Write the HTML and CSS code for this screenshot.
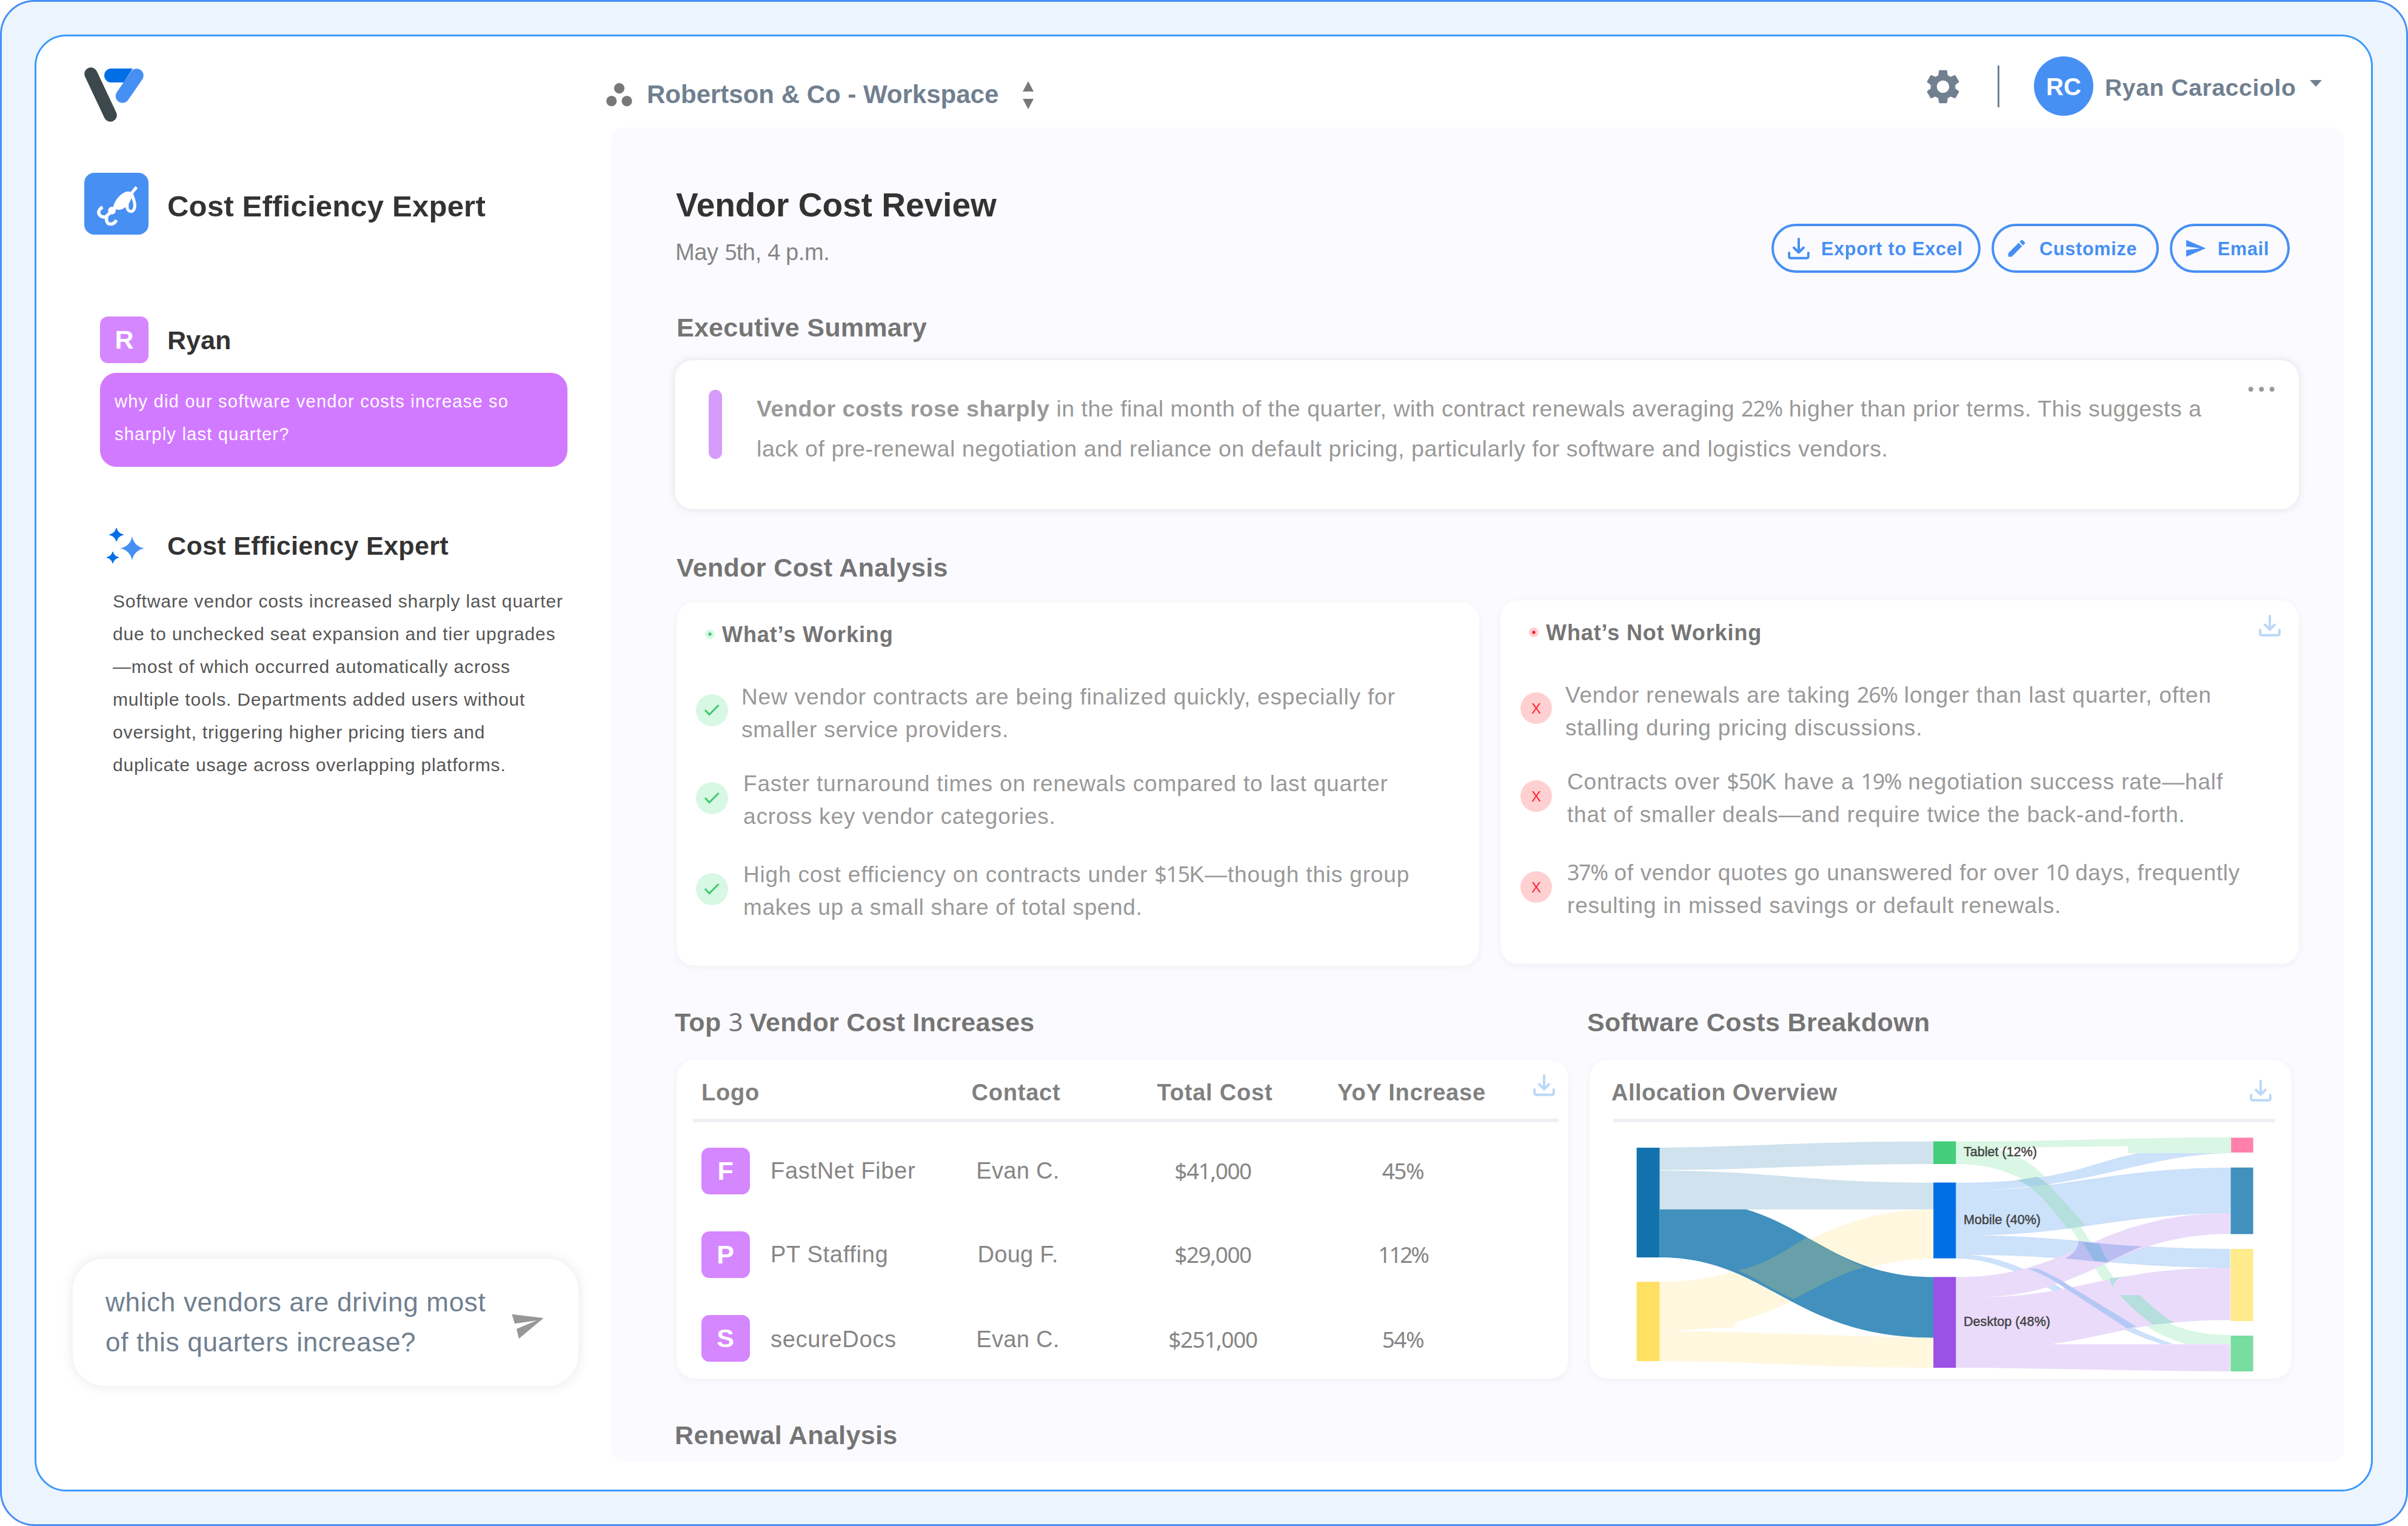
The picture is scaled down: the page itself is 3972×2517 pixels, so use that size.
FILE: index.html
```html
<!DOCTYPE html>
<html lang="en">
<head>
<meta charset="utf-8">
<title>Vendor Cost Review</title>
<link rel="stylesheet" href="styles.css">
</head>
<body>
<svg class="defs" width="0" height="0" aria-hidden="true">
  <symbol id="download" viewBox="0 0 36 36"><path d="M18 2v22M10 16.5l8 8 8-8M2.2 25v6.2a2.6 2.6 0 0 0 2.6 2.6h26.400a2.600 2.600 0 0 0 2.600-2.600V25" fill="none" stroke="currentColor" stroke-width="4" stroke-linecap="round" stroke-linejoin="round"/></symbol>
  <symbol id="check" viewBox="0 0 53 53"><circle cx="26.500" cy="26.500" r="26.500" fill="#d7f8e3"/><path d="M15 26l7 7.500L37.500 18" fill="none" stroke="#3fc871" stroke-width="3"/></symbol>
</svg>
<div class="frame">
<div class="window">
  <aside class="sidebar">
    <svg class="logo" viewBox="139 111 98 90"><path d="M150 122l32 68" stroke="#3d484d" stroke-width="21.500" stroke-linecap="round"/><path d="M225.500 124.500L202 158.500" stroke="#4790f3" stroke-width="22.500" stroke-linecap="round"/><path d="M183.500 113H219l-15 23h-20.500a11.500 11.500 0 0 1 0-23z" fill="#006fe6"/></svg>
    <div class="agent">
      <svg class="agent-icon" viewBox="21 27 318 306"><rect x="21" y="27" width="318" height="306" rx="50" fill="#478ff3"/><path d="M164 206C162 178 192 136 222 123c16-7 32-3 37 8-6 46-38 80-69 79z" fill="#fff"/><g fill="none" stroke="#fff"><path d="M250 134l30-36" stroke-width="15"/><path d="M256 134c8 18 15 38 15 55 0 18-8 29-19 29s-19-9-19-24c0-22 8-42 23-60z" stroke-width="15"/><path d="M152 222l-24 22M112 197c-22 12-24 30-14 40 9 10 22 10 34 8-5 22 4 36 20 36 13 0 22-8 28-20" stroke-width="16"/></g><circle cx="158" cy="214" r="19" fill="#fff"/></svg>
      <h1 class="agent-name">Cost Efficiency Expert</h1>
    </div>
    <div class="thread">
      <div class="sender"><span class="badge">R</span><h2 class="sender-name">Ryan</h2></div>
      <p class="bubble">why did our software vendor costs increase so<br>sharply last quarter?</p>
      <div class="sender reply"><svg class="sparkles" viewBox="176 871 62 58"><path d="M218 884.500q3 16.500 20 20-17 3.500-20 20-3-16.500-20-20 17-3.500 20-20z" fill="#4790f3"/><path d="M192 871q2.200 8.800 11.500 11-9.300 2.200-11.500 11-2.200-8.800-11.500-11 9.300-2.200 11.500-11zM186 910q2 7.600 10 9.500-8 1.900-10 9.500-2-7.600-10-9.500 8-1.900 10-9.500z" fill="#006fe6" stroke="#006fe6"/></svg><h2 class="sender-name">Cost Efficiency Expert</h2></div>
      <p class="answer">Software vendor costs increased sharply last quarter<br>due to unchecked seat expansion and tier upgrades<br>—most of which occurred automatically across<br>multiple tools. Departments added users without<br>oversight, triggering higher pricing tiers and<br>duplicate usage across overlapping platforms.</p>
    </div>
    <div class="composer">
      <p class="draft">which vendors are driving most<br>of this quarters increase?</p>
      <svg class="send" viewBox="844 2166 53 41"><path d="M844.400 2166.700L896.700 2173l-40.800 34-3.900-16 33-14-36 5.300z" fill="#979797"/></svg>
    </div>
  </aside>
  <main class="main">
    <header class="topbar">
      <svg class="dots" viewBox="1000 137 43 39"><g fill="#787878"><circle cx="1021.500" cy="145.600" r="8.600"/><circle cx="1008.700" cy="166.700" r="8.600"/><circle cx="1034" cy="166.700" r="8.600"/></g></svg>
      <span class="workspace">Robertson &amp; Co - Workspace</span>
      <svg class="sorter" viewBox="0 0 18 46"><path d="M9 0l9 17H0zM9 46l9-17H0z" fill="#787878"/></svg>
      <div class="account">
        <svg class="gear" viewBox="0 0 24 24"><path fill="#708090" d="M19.140 12.940c.04-.3.060-.61.060-.94 0-.32-.02-.64-.07-.94l2.030-1.580c.18-.14.230-.41.120-.61l-1.920-3.320c-.12-.22-.37-.29-.59-.22l-2.390.96c-.5-.38-1.030-.7-1.620-.94l-.36-2.540c-.04-.24-.24-.41-.48-.41h-3.840c-.24 0-.43.17-.47.41l-.36 2.540c-.59.24-1.130.57-1.620.94l-2.390-.96c-.22-.08-.47 0-.59.22L2.740 8.870c-.12.21-.08.47.12.61l2.030 1.580c-.05.3-.09.63-.09.94s.02.64.07.94l-2.030 1.580c-.18.14-.23.41-.12.61l1.920 3.320c.12.22.37.29.59.22l2.390-.96c.5.38 1.030.7 1.620.94l.36 2.540c.05.24.24.41.48.41h3.840c.24 0 .44-.17.47-.41l.36-2.540c.59-.24 1.130-.56 1.620-.94l2.390.96c.22.08.47 0 .59-.22l1.920-3.320c.12-.22.070-.47-.12-.61l-2.010-1.580zM12 15.600c-1.980 0-3.600-1.620-3.600-3.600s1.620-3.600 3.600-3.600 3.600 1.620 3.600 3.600-1.620 3.600-3.600 3.600z"/></svg>
        <span class="divider"></span>
        <span class="avatar">RC</span>
        <span class="user">Ryan Caracciolo</span>
        <svg class="caret" viewBox="0 0 20 11"><path d="M0 0h20L10 11z" fill="#708090"/></svg>
      </div>
    </header>
    <section class="panel">
      <div class="report-head">
        <div>
          <h2 class="report-title">Vendor Cost Review</h2>
          <p class="report-date">May <span class="num">5</span>th, <span class="num">4</span> p.m.</p>
        </div>
        <div class="actions">
          <button class="btn btn-export"><svg class="i-download"><use href="#download"/></svg>Export to Excel</button>
          <button class="btn btn-custom"><svg class="i-pencil" viewBox="0 0 24 24"><path fill="currentColor" d="M3 17.250V21h3.750L17.810 9.940l-3.750-3.750L3 17.250zM20.710 7.040a1 1 0 0 0 0-1.410l-2.340-2.340a1 1 0 0 0-1.410 0l-1.830 1.830 3.750 3.750 1.830-1.830z"/></svg>Customize</button>
          <button class="btn btn-email"><svg class="i-send" viewBox="0 0 24 24"><path fill="currentColor" d="M2.010 21L23 12 2.010 3 2 10l15 2-15 2z"/></svg>Email</button>
        </div>
      </div>
      <h3 class="heading h-exec">Executive Summary</h3>
      <div class="card exec">
        <span class="accent"></span>
        <p class="exec-text"><b>Vendor costs rose sharply</b><span class="tight"> in the final month of the quarter, with contract renewals averaging <span class="num">22%</span> higher than prior terms. This suggests a</span><br>lack of pre-renewal negotiation and reliance on default pricing, particularly for software and logistics vendors.</p>
        <svg class="more" viewBox="0 0 44 8"><g fill="#999"><circle cx="4.800" cy="4" r="4"/><circle cx="22.300" cy="4" r="4"/><circle cx="39.700" cy="4" r="4"/></g></svg>
      </div>
      <h3 class="heading h-analysis">Vendor Cost Analysis</h3>
      <div class="analysis">
        <div class="card working">
          <h4 class="verdict"><svg class="pulse" viewBox="0 0 16 16"><circle cx="8" cy="8" r="8" fill="#d7f8e3"/><circle cx="8" cy="8" r="2.700" fill="#3fc871"/></svg>What’s Working</h4>
          <div class="item first"><svg class="mark"><use href="#check"/></svg><p>New vendor contracts are being finalized quickly, especially for<br>smaller service providers.</p></div>
          <div class="item second"><svg class="mark"><use href="#check"/></svg><p>Faster turnaround times on renewals compared to last quarter<br>across key vendor categories.</p></div>
          <div class="item third"><svg class="mark"><use href="#check"/></svg><p>High cost efficiency on contracts under <span class="num">$15</span>K—though this group<br><span class="snug">makes up a small share of total spend.</span></p></div>
        </div>
        <div class="card not-working">
          <svg class="card-download top-right"><use href="#download"/></svg>
          <h4 class="verdict"><svg class="pulse" viewBox="0 0 16 16"><circle cx="8" cy="8" r="8" fill="#ffd0d2"/><circle cx="8" cy="8" r="2.700" fill="#ff1f2e"/></svg>What’s Not Working</h4>
          <div class="item first"><span class="cross">X</span><p>Vendor renewals are taking <span class="num">26%</span> longer than last quarter, often<br>stalling during pricing discussions.</p></div>
          <div class="item second"><span class="cross">X</span><p>Contracts over <span class="num">$50</span>K have a <span class="num">19%</span> negotiation success rate—half<br>that of smaller deals—and require twice the back-and-forth.</p></div>
          <div class="item third"><span class="cross">X</span><p><span class="snug"><span class="num">37%</span> of vendor quotes go unanswered for over <span class="num">10</span> days, frequently</span><br>resulting in missed savings or default renewals.</p></div>
        </div>
      </div>
      <div class="bottom">
        <div class="increases">
          <h3 class="heading top3">Top <span class="num">3</span> Vendor Cost Increases</h3>
          <div class="card vendor-table">
            <div class="cols head"><span>Logo</span><span class="c">Contact</span><span class="c">Total Cost</span><span class="c">YoY Increase</span><svg class="card-download"><use href="#download"/></svg></div>
            <div class="rule"></div>
            <div class="cols row"><span class="vendor"><span class="badge">F</span>FastNet Fiber</span><span class="c contact">Evan C.</span><span class="c num">$41,000</span><span class="c num">45%</span></div>
            <div class="cols row"><span class="vendor"><span class="badge">P</span>PT Staffing</span><span class="c contact">Doug F.</span><span class="c num">$29,000</span><span class="c num ones">112%</span></div>
            <div class="cols row last"><span class="vendor"><span class="badge">S</span>secureDocs</span><span class="c contact">Evan C.</span><span class="c num">$251,000</span><span class="c num">54%</span></div>
          </div>
        </div>
        <div class="breakdown">
          <h3 class="heading">Software Costs Breakdown</h3>
          <div class="card chart-card">
            <div class="chart-head">Allocation Overview<svg class="card-download"><use href="#download"/></svg></div>
            <div class="rule"></div>
            <svg class="sankey" viewBox="2690 1860 1040 410">
              <g transform="translate(2600 1720) scale(.790816 .369898)">
                <path d="M174 468C380 462 480 440 746 440V541C480 541 380 567 174 567zM174 570C400 570 480 624 746 624V743H174z" fill="#cfe2ed"/>
                <path d="M174 1066C430 1066 490 743 746 743V962C560 962 480 1170 330 1246V1270C280 1270 240 1280 204 1286C400 1290 600 1313 746 1313V1449C500 1449 380 1420 174 1420z" fill="#fff8df"/>
                <path d="M174 743H355C490 830 560 1045 746 1045V1315C450 1315 400 957 174 957z" fill="#4190be"/>
                <path d="M480 868C525 915 560 970 602 1000C548 1030 500 1095 453 1143C410 1105 380 1050 337 1015C400 985 440 920 480 868z" fill="#689fa8"/>
                <path d="M792 440C1000 440 1150 422 1367 422V492H1151V461C1020 463 930 468 870 472C1090 560 1050 1303 1364 1303V1344H1275C1020 1200 1090 541 792 541z" fill="#d9f7e4"/>
                <path d="M792 624C1020 624 1060 540 1172 492H1364C1180 500 1090 640 832 659C1030 650 1130 557 1364 557V760C1130 765 1030 858 832 858C1050 865 1130 919 1364 919V1003C1130 1003 1040 945 820 947C960 960 1080 1230 1247 1344H1222C1050 1230 940 962 792 962z" fill="#cce1fa"/>
                <path d="M792 1045C1040 1045 1080 760 1364 760V852C1120 852 1070 1135 832 1135C1050 1135 1100 1003 1364 1003V1236C1180 1236 1110 1310 990 1344H1364V1465C1180 1465 980 1449 792 1449z" fill="#eadbfb"/>
                <path d="M1047 884Q1115 900 1180 908Q1145 940 1107 980Q1080 974 1020 962Q1050 925 1047 884z" fill="#b9bdf2"/>
                <path d="M920 612Q944 606 962 597Q976 615 986 635L945 641Q935 625 920 612z" fill="#a9d3e4"/>
                <path d="M1057 890L1090 896Q1100 940 1110 978L1080 972Q1068 930 1057 890z" fill="#93b9e6"/>
                <path d="M945 641L986 635C1015 700 1040 760 1062 815L1025 830C1000 760 975 690 945 641zM1112 1052L1140 1042Q1122 1055 1119 1090zM1134 1125H1176Q1210 1200 1247 1248L1203 1256Q1160 1190 1134 1125z" fill="#b4dfdc"/>
                <path d="M942 1007H962Q1000 1040 1030 1085L1168 1265L1150 1275L1020 1095Q985 1040 942 1007z" fill="#b4c8f5"/>
                <path d="M126 468h48v489h-48z" fill="#1273ac"/><path d="M126 1066h48v353h-48z" fill="#ffe063"/><path d="M745 439h47v102h-47z" fill="#44ce7b"/><path d="M745 623h47v338h-47z" fill="#006fe6"/><path d="M745 1044h47v405h-47z" fill="#9b50e6"/><path d="M1366 423h46v66h-46z" fill="#ff80aa"/><path d="M1365 556h47v297h-47z" fill="#4190be"/><path d="M1365 919h47v322h-47z" fill="#ffea8c"/><path d="M1365 1306h47v159h-47z" fill="#78dda0"/>
              </g>
              <g class="node-label"><text x="3239" y="1907" textLength="121">Tablet (12%)</text><text x="3239" y="2018.500" textLength="127">Mobile (40%)</text><text x="3239" y="2186.800" textLength="143">Desktop (48%)</text></g>
            </svg>
          </div>
        </div>
      </div>
      <h3 class="heading h-renewal">Renewal Analysis</h3>
    </section>
  </main>
</div>
</div>
</body>
</html>
```
FILE: styles.css
```css
*{box-sizing:border-box}
body{margin:0;font-family:"Liberation Sans",Arial,sans-serif;background:#fff;white-space:nowrap}
h1,h2,h3,h4,p{margin:0}
svg{display:block;flex:none}
.defs{position:absolute}
.frame{width:3972px;height:2517px;border:3px solid #478ff3;border-radius:57px;background:#ecf4fe;padding:54px}
.window{display:flex;width:3857px;height:2403px;border:3px solid #3b99fc;border-radius:52px;background:#fff}
.sidebar{display:flex;flex-direction:column;width:940px}
.logo{width:98px;height:90px;margin:51px 0 0 79px}
.agent{display:flex;gap:31px;margin:84px 0 0 79px}
.agent-icon{width:106px;height:102px}
.agent-name{font-size:49px;line-height:102px;letter-spacing:.22px;color:#333;padding-top:4px;height:102px}
.thread{width:771px;margin:135px 0 0 105px}
.sender{display:flex;height:77px;gap:31px}
.sender-name{font-size:43px;line-height:78px;color:#333}
.badge{width:80px;height:77px;border-radius:13px;background:#d587ff;color:#fff;font-weight:700;font-size:43px;line-height:77px;text-align:center}
.bubble{height:155px;margin-top:16px;padding:21px 24px 0;border-radius:27px;background:#d27aff;color:#fff;font-size:29px;line-height:53.5px;letter-spacing:1.23px}
.reply{height:58px;margin-top:101px;padding-left:11px;gap:38px}
.reply .sender-name{line-height:58px;letter-spacing:.34px}
.sparkles{width:62px;height:58px}
.answer{margin:36px 0 0 21px;font-size:30px;line-height:54px;letter-spacing:.85px;color:#555}
.composer{display:flex;width:834px;height:210px;margin:auto 0 171px 60px;border-radius:52px;background:#fff;box-shadow:0 0 20px rgba(60,50,110,.12)}
.draft{width:724px;padding:39px 0 0 54px;font-size:44px;line-height:66px;letter-spacing:.7px;color:#708090}
.send{width:53px;height:41px;margin-top:91px}
.main{width:2867px}
.topbar{display:flex;align-items:flex-start;height:150px;padding-right:37px;color:#708090;font-weight:700}
.dots{width:43px;height:39px;margin-top:77px}
.workspace{width:589px;margin:71px 0 0 24px;font-size:42px;line-height:50px}
.sorter{width:18px;height:46px;margin:74px 0 0 31px}
.account{display:flex;align-items:flex-start;margin-left:auto}
.gear{width:68px;height:68px;margin-top:49px}
.divider{width:3px;height:69px;margin:48px 0 0 56px;background:#708090}
.avatar{width:98px;height:98px;margin:33px 0 0 57px;border-radius:50%;background:#4790f3;color:#fff;font-size:40px;line-height:100px;text-align:center}
.user{width:328px;margin:60px 0 0 19px;font-size:39px;line-height:50px;letter-spacing:.65px}
.caret{width:20px;height:11px;margin:72px 0 0 10px}
.panel{height:2202px;margin-left:8px;padding:0 75px 0 105px;border-radius:24px;background:#fbfbff;overflow:hidden}
.report-head{display:flex;justify-content:space-between;height:230px}
.report-title{padding:96px 0 0 2px;font-size:55px;line-height:64px;color:#333}
.report-date{margin-top:22px;padding-left:1px;font-size:38px;line-height:48px;letter-spacing:-.35px;color:#868686}
.actions{display:flex;gap:18px;padding:159px 15px 0 0}
.btn{display:flex;align-items:center;height:81px;border:4px solid #478ff3;border-radius:41px;background:transparent;color:#478ff3;font:700 30.5px "Liberation Sans",Arial,sans-serif;letter-spacing:.78px;padding:2px 0 0}
.btn-export{width:345px;padding-left:23px;gap:19px}
.btn-custom{width:276px;padding-left:19px;gap:19px}
.btn-email{width:198px;padding-left:20px;gap:18px}
.i-download,.i-pencil,.i-send{margin-top:-2px}
.i-download{width:36px;height:36px}
.i-pencil,.i-send{width:37px;height:37px}
.heading{font-size:43px;line-height:50px;letter-spacing:.37px;color:#757575}
.card{position:relative;border-radius:30px;background:#fff;box-shadow:0 3px 12px rgba(40,40,60,.06)}
.h-exec{margin-top:75px;padding-left:3px;letter-spacing:.25px}
.exec{display:flex;height:246px;margin-top:29px;padding-left:56px;box-shadow:0 0 14px rgba(30,30,50,.13)}
.accent{width:22px;height:114px;margin-top:49px;border-radius:11px;background:#d59bfa}
.exec-text{padding:47px 0 0 57px;font-size:37.5px;line-height:66px;letter-spacing:.58px;color:#999}
.tight{letter-spacing:.52px}
.num{font-family:"Noto Sans","Liberation Sans",sans-serif;font-size:.97em;font-weight:400;line-height:0;letter-spacing:-1.4px}
.snug{letter-spacing:.66px}
.more{width:44px;height:8px;margin:44px 40px 0 auto}
.h-analysis{margin-top:71px;padding-left:3px}
.analysis{display:flex;align-items:flex-start;gap:35px;margin-top:29px}
.working{width:1324px;height:600px;margin:3px 0 0 3px;padding-top:32px}
.not-working{width:1317px;height:600px;padding-top:32px}
.verdict{display:flex;align-items:center;gap:12px;height:44px;padding-left:47px;font-size:36px;letter-spacing:.9px;color:#757575}
.pulse{width:16px;height:16px;margin-top:-2px}
.item{display:flex;height:108px;padding-left:33px;gap:25px;font-size:37px;line-height:54px;letter-spacing:.83px;color:#999}
.first{margin-top:54px;gap:22px}
.second{margin-top:35px}
.third{margin-top:42px}
.mark,.cross{width:53px;height:53px;margin:24px 0 0 -1px}
.first .mark,.first .cross{margin-top:22px}
.not-working .item{padding-left:34px}
.cross{width:52px;height:52px;border-radius:50%;background:#ffd0d2;color:#ff1f2e;font-size:24px;line-height:54px;letter-spacing:0;text-align:center}
.card-download{width:36px;height:36px;color:#bbd8f8}
.top-right{position:absolute;top:24px;right:30px}
.bottom{display:flex;margin-top:68px}
.increases{width:1505px}
.top3{letter-spacing:.3px}
.vendor-table{width:1471px;height:526px;margin:37px 0 0 3px}
.cols{display:grid}
.head{grid-template-columns:369px 300px 356px 293px 1fr;height:97px;padding:30px 0 0 41px;font-size:38px;font-weight:700;line-height:48px;letter-spacing:.8px;color:#808080}
.head .card-download{margin:-6px 0 0 54px}
.c{text-align:center}
.rule{height:6px;margin:0 16px 0 27px;background:#efeff4}
.row{grid-template-columns:372px 300px 343px 284px;height:77px;margin-top:61px;padding-left:41px;font-size:38px;line-height:77px;color:#868686}
.row .num{line-height:77px}
.row .ones{letter-spacing:-3px}
.rule + .row{margin-top:42px}
.last{line-height:80px}
.last .num{line-height:80px}
.vendor{display:flex;gap:34px;letter-spacing:.7px}
.contact{letter-spacing:.3px}
.chart-card{width:1158px;height:526px;margin:37px 0 0 4px}
.chart-head{display:flex;justify-content:space-between;height:97px;padding:30px 33px 0 36px;font-size:38px;font-weight:700;line-height:48px;letter-spacing:.51px;color:#808080}
.chart-head .card-download{margin-top:3px}
.chart-card .rule{margin:0 27px 0 39px}
.sankey{width:1040px;height:410px;margin:9px 0 0 68px}
.node-label{font-size:21.5px;fill:#444;stroke:#444;stroke-width:.5px}
.h-renewal{margin-top:68px}
```
